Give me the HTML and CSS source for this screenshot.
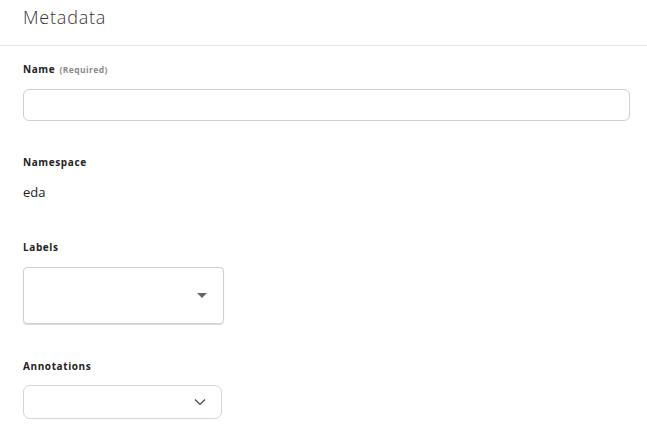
FILE: index.html
```html
<!DOCTYPE html>
<html>
<head>
<meta charset="utf-8">
<link rel="stylesheet" href="styles.css">
</head>
<body>
<div class="page">
  <header class="header">
    <h1 class="title">Metadata</h1>
  </header>
  <div class="form">
    <div class="field field-name">
      <div class="label">Name <span class="req">(Required)</span></div>
      <div class="input"></div>
    </div>
    <div class="field field-ns">
      <div class="label">Namespace</div>
      <div class="value">eda</div>
    </div>
    <div class="field field-labels">
      <div class="label">Labels</div>
      <div class="select-box">
        <svg class="caret" width="10" height="6" viewBox="0 0 10 6"><path d="M0 0h10L5 5z" fill="#666"/></svg>
      </div>
    </div>
    <div class="field field-ann">
      <div class="label">Annotations</div>
      <div class="dropdown">
        <svg class="chevron" width="12" height="8" viewBox="0 0 12 8"><path d="M1 1.5l5 5 5-5" fill="none" stroke="#444" stroke-width="1.2"/></svg>
      </div>
    </div>
  </div>
</div>
</body>
</html>
```

FILE: styles.css
```css
html, body {
  margin: 0;
  padding: 0;
  background: #fff;
}
body {
  font-family: "Open Sans", "Noto Sans", sans-serif;
  color: #222;
}
.page {
  width: 647px;
  height: 425px;
  overflow: hidden;
}
.header {
  height: 46px;
  border-bottom: 1px solid #e6e6e6;
  padding-left: 23px;
  box-sizing: border-box;
}
.title {
  margin: 0;
  padding-top: 4px;
  font-size: 18px;
  font-weight: 300;
  color: #333;
  line-height: 26px;
  letter-spacing: 0.8px;
}
.form {
  padding: 0 17px 0 23px;
  display: flex;
  flex-direction: column;
}
.label {
  font-size: 10px;
  font-weight: 700;
  color: #222;
  line-height: 14px;
  letter-spacing: 0.6px;
}
.req {
  font-size: 8.5px;
  color: #8a8a8a;
  font-weight: 700;
  letter-spacing: 0.4px;
  margin-left: 1px;
}
.field-name {
  padding-top: 16px;
}
.input {
  margin-top: 12px;
  height: 32px;
  border: 1px solid #cfcfcf;
  border-radius: 6px;
  box-sizing: border-box;
}
.field-ns {
  margin-top: 34px;
}
.value {
  margin-top: 15px;
  font-size: 13px;
  line-height: 16px;
  color: #222;
}
.field-labels {
  margin-top: 40px;
}
.select-box {
  margin-top: 13px;
  width: 201px;
  height: 57px;
  border: 1px solid #cfcfcf;
  border-radius: 4px;
  box-sizing: border-box;
  box-shadow: 0 1px 1px rgba(0,0,0,0.15);
  display: flex;
  align-items: center;
  justify-content: flex-end;
  padding-right: 16px;
}
.caret {
  display: block;
}
.field-ann {
  margin-top: 35px;
}
.dropdown {
  margin-top: 12px;
  width: 199px;
  height: 34px;
  border: 1px solid #d4d4d4;
  border-radius: 7px;
  box-sizing: border-box;
  display: flex;
  align-items: center;
  justify-content: flex-end;
  padding-right: 15px;
}
.chevron {
  display: block;
}
```
